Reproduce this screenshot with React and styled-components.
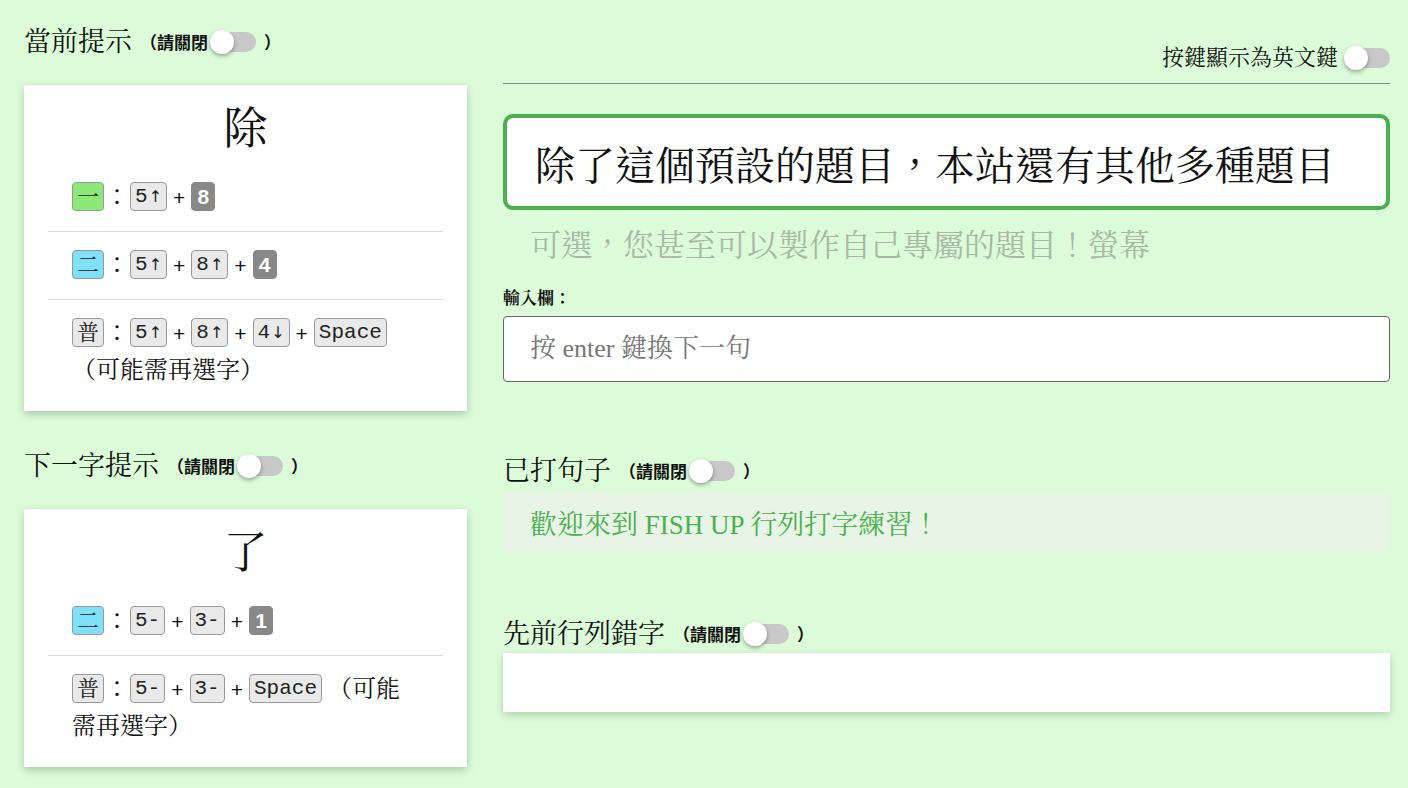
import React from "react";
import styled, { createGlobalStyle } from "styled-components";

const GlobalStyle = createGlobalStyle`
  body {
    margin: 0;
    background: #dcfcd9;
    font-family: "Liberation Serif", "Noto Serif CJK TC", "Noto Sans CJK TC", serif;
    color: #111;
  }
`;

const Page = styled.div`
  display: flex;
  gap: 36px;
  padding: 24px 18px 0 24px;
  min-height: 764px;
`;

const LeftCol = styled.div`
  width: 443px;
  flex-shrink: 0;
  display: flex;
  flex-direction: column;
`;

const RightCol = styled.div`
  flex: 1;
  display: flex;
  flex-direction: column;
`;

const Title = styled.div`
  display: flex;
  align-items: center;
  font-size: 27px;
  line-height: 36px;
  height: 36px;
  margin-top: ${(p) => p.$mt || 0}px;
`;

const Small = styled.span`
  font-size: 17px;
  font-weight: bold;
  margin-left: 8px;
  display: inline-flex;
  align-items: center;
  font-family: "Noto Sans CJK TC", sans-serif;
`;

const Track = styled.span`
  position: relative;
  display: inline-block;
  width: 44px;
  height: 20px;
  border-radius: 10px;
  background: #c8c8c8;
  margin: 0 ${(p) => (p.$end ? 0 : 8)}px 0 ${(p) => (p.$end ? 8 : 4)}px;
`;

const Knob = styled.span`
  position: absolute;
  left: -2px;
  top: -2px;
  width: 24px;
  height: 24px;
  border-radius: 50%;
  background: #fff;
  box-shadow: 0 2px 4px rgba(0, 0, 0, 0.35);
`;

const Toggle = ({ end }) => (
  <Track $end={end}>
    <Knob />
  </Track>
);

const Hint = () => (
  <Small>
    （請關閉
    <Toggle />）
  </Small>
);

const Card = styled.div`
  background: #fff;
  margin-top: 25px;
  padding: 18px 24px 8px;
  box-shadow: 0 3px 8px rgba(0, 0, 0, 0.22);
`;

const BigChar = styled.div`
  text-align: center;
  font-size: 44px;
  line-height: 54px;
  margin-bottom: 7px;
`;

const Row = styled.div`
  padding: 15px 24px;
  font-size: 24px;
  line-height: 36px;
  border-bottom: 1px solid #dcdcdc;
  &:last-child {
    border-bottom: none;
  }
`;

const colors = {
  green: { bg: "#8ee878", fg: "#222" },
  cyan: { bg: "#7fe0f8", fg: "#222" },
  dark: { bg: "#888", fg: "#fff" },
  plain: { bg: "#e9e9e9", fg: "#222" },
};

const Key = styled.span`
  display: inline-block;
  min-width: 16px;
  padding: 0 ${(p) => (p.$kind === "dark" ? 3 : 4)}px;
  height: 27px;
  line-height: 27px;
  margin-top: 3px;
  font-size: ${(p) => (p.$cjk ? 22 : 21)}px;
  text-align: center;
  border-radius: 4px;
  vertical-align: top;
  border: 1px solid ${(p) => (p.$kind === "dark" ? "#888" : "#999")};
  background: ${(p) => colors[p.$kind || "plain"].bg};
  color: ${(p) => colors[p.$kind || "plain"].fg};
  font-weight: ${(p) => (p.$kind === "dark" ? "bold" : "normal")};
  font-family: ${(p) =>
    p.$cjk
      ? `"Liberation Serif", "Noto Serif CJK TC", "Noto Sans CJK TC", serif`
      : p.$kind === "dark"
      ? `"Liberation Sans", sans-serif`
      : `"Liberation Mono", "DejaVu Sans Mono", monospace`};
`;

const Arrow = styled.span`
  font-family: "DejaVu Sans", sans-serif;
  font-size: 16px;
  margin-left: 1px;
`;

const Plus = styled.span`
  margin: 0 6px;
  font-family: "Liberation Sans", sans-serif;
  font-size: 21px;
`;

const Colon = styled.span`
  margin: 0 1px;
`;

const KeyLabel = ({ t }) => {
  const last = t.slice(-1);
  if (last === "↑" || last === "↓") {
    return (
      <>
        {t.slice(0, -1)}
        <Arrow>{last}</Arrow>
      </>
    );
  }
  return t;
};

const Seq = ({ keys }) =>
  keys.map((k, i) => (
    <React.Fragment key={i}>
      {i > 0 && <Plus>+</Plus>}
      <Key $kind={k.kind}>
        <KeyLabel t={k.t} />
      </Key>
    </React.Fragment>
  ));

const KeyRow = ({ root, kind, keys, note }) => (
  <Row>
    <Key $cjk $kind={kind}>{root}</Key>
    <Colon>：</Colon>
    <Seq keys={keys} />
    {note}
  </Row>
);

const TopBar = styled.div`
  display: flex;
  justify-content: flex-end;
  align-items: center;
  font-size: 22px;
  line-height: 30px;
  margin-top: 19px;
  padding-bottom: 10px;
  border-bottom: 1px solid #7f8f8f;
`;

const Prompt = styled.div`
  margin-top: 30px;
  height: 88px;
  border: 4px solid #4caf50;
  border-radius: 10px;
  background: #fff;
  display: flex;
  align-items: center;
  padding-left: 28px;
  font-size: 40px;
  white-space: nowrap;
  overflow: hidden;
`;

const Upcoming = styled.div`
  margin-top: 16px;
  padding-left: 27px;
  font-size: 31px;
  line-height: 40px;
  color: #a8b8a8;
`;

const Label = styled.div`
  margin-top: 22px;
  font-size: 17px;
  line-height: 22px;
  font-weight: bold;
`;

const Input = styled.input`
  margin-top: 6px;
  height: 66px;
  box-sizing: border-box;
  border: 1px solid #666;
  border-radius: 4px;
  background: #fff;
  padding: 0 26px;
  font-size: 26px;
  font-family: inherit;
  outline: none;
  &::placeholder {
    color: #777;
  }
`;

const Typed = styled.div`
  margin-top: 3px;
  height: 60px;
  background: #e8f5e6;
  display: flex;
  align-items: center;
  padding-left: 27px;
  font-size: 27px;
  color: #4caf50;
`;

const Mistakes = styled.div`
  margin-top: 1px;
  height: 59px;
  background: #fff;
  box-shadow: 0 3px 8px rgba(0, 0, 0, 0.18);
`;

export default function App() {
  return (
    <>
      <GlobalStyle />
      <Page>
        <LeftCol>
          <Title>
            當前提示
            <Hint />
          </Title>
          <Card>
            <BigChar>除</BigChar>
            <KeyRow root="一" kind="green" keys={[{ t: "5↑" }, { t: "8", kind: "dark" }]} />
            <KeyRow
              root="二"
              kind="cyan"
              keys={[{ t: "5↑" }, { t: "8↑" }, { t: "4", kind: "dark" }]}
            />
            <KeyRow
              root="普"
              keys={[{ t: "5↑" }, { t: "8↑" }, { t: "4↓" }, { t: "Space" }]}
              note={<> （可能需再選字）</>}
            />
          </Card>
          <Title $mt={37}>
            下一字提示
            <Hint />
          </Title>
          <Card>
            <BigChar>了</BigChar>
            <KeyRow
              root="二"
              kind="cyan"
              keys={[{ t: "5-" }, { t: "3-" }, { t: "1", kind: "dark" }]}
            />
            <KeyRow
              root="普"
              keys={[{ t: "5-" }, { t: "3-" }, { t: "Space" }]}
              note={<> （可能需再選字）</>}
            />
          </Card>
        </LeftCol>
        <RightCol>
          <TopBar>
            按鍵顯示為英文鍵
            <Toggle end />
          </TopBar>
          <Prompt>除了這個預設的題目，本站還有其他多種題目</Prompt>
          <Upcoming>可選，您甚至可以製作自己專屬的題目！螢幕</Upcoming>
          <Label>輸入欄：</Label>
          <Input placeholder="按 enter 鍵換下一句" />
          <Title $mt={71}>
            已打句子
            <Hint />
          </Title>
          <Typed>歡迎來到 FISH UP 行列打字練習！</Typed>
          <Title $mt={64}>
            先前行列錯字
            <Hint />
          </Title>
          <Mistakes />
        </RightCol>
      </Page>
    </>
  );
}
